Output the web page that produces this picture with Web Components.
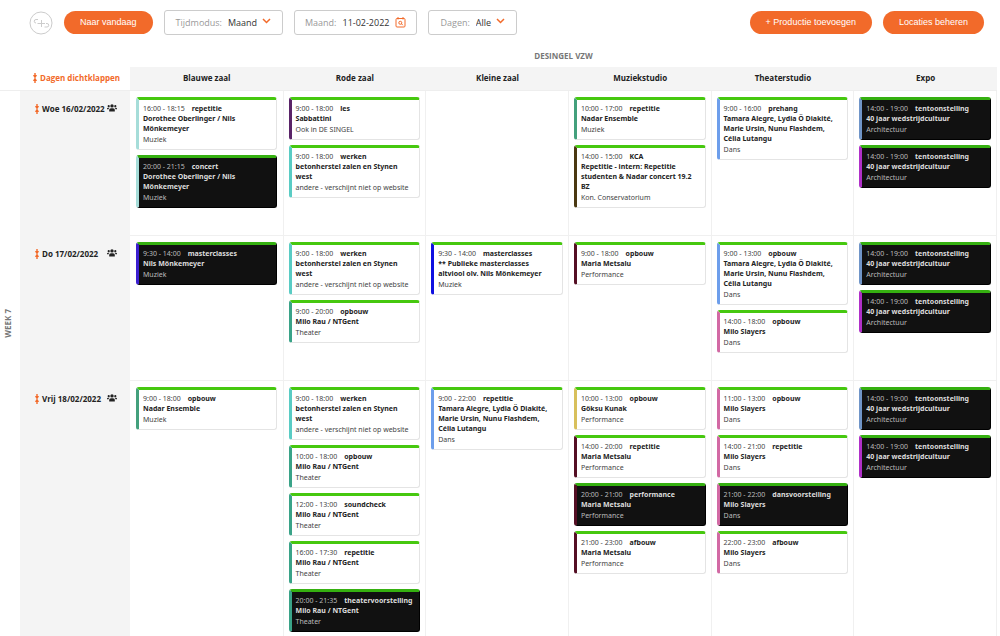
<!DOCTYPE html>
<html lang="nl">
<head>
<meta charset="utf-8">
<title>Planning</title>
<style>
html, body { margin: 0; height: 100%; background: #fff; }
body { font-family: "Open Sans", "Noto Sans", sans-serif; color: #222; }
</style>
</head>
<body>
<planner-app></planner-app>
<script>
const ORANGE = '#f26a2a';

class PillButton extends HTMLElement {
  constructor() {
    super();
    this.attachShadow({ mode: 'open' }).innerHTML = `
      <style>
        :host { display: block; }
        button { height: 23px; padding: 0 16px; border: 0; border-radius: 12px; background: ${ORANGE}; color: #fff;
          font: 9px/23px "Liberation Sans", Arial, sans-serif; white-space: nowrap; cursor: pointer; display: block; }
      </style>
      <button type="button"><slot></slot></button>`;
  }
}
customElements.define('pill-button', PillButton);

class BrandLogo extends HTMLElement {
  constructor() {
    super();
    this.attachShadow({ mode: 'open' }).innerHTML = `
      <style>:host { display: block; } svg { display: block; }</style>
      <svg width="24" height="24" viewBox="0 0 24 24" fill="none" stroke="#ccc" role="img" aria-label="Logo">
        <circle cx="12" cy="12" r="11"/>
        <path d="M9 8.500H7a1.750 1.750 0 0 0 0 3.500M8.500 12.500H16M12.500 9V16M17 12.500H18a1.750 1.750 0 0 1 0 3.500H15.500"/>
      </svg>`;
  }
}
customElements.define('brand-logo', BrandLogo);

const FIELD_CSS = `
  :host { display: block; }
  label { display: flex; align-items: center; box-sizing: border-box; height: 25px; padding: 0 11px; border: 1px solid #ccc;
    border-radius: 3px; font: 9px/12px "Open Sans", "Noto Sans", sans-serif; color: #999; }
  span { margin-right: 6px; }
  select, input { appearance: none; border: 0; padding: 0; margin: 0; background: none; outline: 0; color: #333; font: inherit; height: 12px; }
  svg { display: block; fill: none; stroke: ${ORANGE}; }
`;

class SelectField extends HTMLElement {
  connectedCallback() {
    const w = this.getAttribute('width');
    this.attachShadow({ mode: 'open' }).innerHTML = `
      <style>${FIELD_CSS} select { width: ${w}px; } svg { margin: 0 0 4px 4px; }</style>
      <label><span>${this.getAttribute('label')}:</span>
        <select><option>${this.getAttribute('value')}</option></select>
        <svg width="9" height="6" viewBox="0 0 9 6" stroke-width="1.500"><path d="M1 1l3.500 3.500L8 1"/></svg>
      </label>`;
  }
}
customElements.define('select-field', SelectField);

class DateField extends HTMLElement {
  connectedCallback() {
    this.attachShadow({ mode: 'open' }).innerHTML = `
      <style>${FIELD_CSS} label { padding: 0 10px; } input { width: 49px; } svg { margin-left: 4px; }</style>
      <label><span>${this.getAttribute('label')}:</span>
        <input type="text" value="${this.getAttribute('value')}">
        <svg width="11" height="11" viewBox="0 0 11 11"><rect x="1" y="1.500" width="9" height="8.500" rx="1"/>
          <path d="M3 0v2.500M8 0v2.500"/><circle cx="5.300" cy="5.800" r="1.500"/><path d="M6.500 6.800l1.300 1.400"/></svg>
      </label>`;
  }
}
customElements.define('date-field', DateField);

class CollapseIcon extends HTMLElement {
  constructor() {
    super();
    this.attachShadow({ mode: 'open' }).innerHTML = `
      <style>:host { display: block; } svg { display: block; fill: ${ORANGE}; }</style>
      <svg width="4" height="10" viewBox="0 0 4 10" aria-hidden="true">
        <path d="M1.300 0h1.400v2H4L2.700 4.700H1.300L0 2h1.300zM1.300 10h1.400V8H4L2.700 5.300H1.300L0 8h1.300z"/></svg>`;
  }
}
customElements.define('collapse-icon', CollapseIcon);

class DayLabel extends HTMLElement {
  constructor() {
    super();
    this.attachShadow({ mode: 'open' }).innerHTML = `
      <style>
        :host { display: flex; align-items: center; padding: 12px 13px 0 15px; font: 700 8px/12px "Open Sans", "Noto Sans", sans-serif; }
        span { flex: 1; margin-left: 3px; white-space: nowrap; }
        svg { display: block; fill: #222; margin-bottom: 2px; }
      </style>
      <collapse-icon></collapse-icon><span><slot></slot></span>
      <svg width="10" height="8" viewBox="0 0 10 8" aria-hidden="true">
        <circle cx="5" cy="1.900" r="1.700"/><circle cx="1.700" cy="2.200" r="1.100"/><circle cx="8.300" cy="2.200" r="1.100"/>
        <path d="M2.200 7.500V5.800Q2.200 4.200 4 4.200H6Q7.800 4.200 7.800 5.800V7.500zM0 5.300V4.700Q0 3.700 1 3.700H2.500Q1.500 4.400 1.500 5.300zM10 5.300V4.700Q10 3.700 9 3.700H7.500Q8.500 4.400 8.500 5.300z"/>
      </svg>`;
  }
}
customElements.define('day-label', DayLabel);

class EventCard extends HTMLElement {
  constructor() {
    super();
    this.attachShadow({ mode: 'open' }).innerHTML = `
      <style>
        :host { display: block; box-sizing: border-box; border: 1px solid #e4e4e4; border-top: 3px solid #46c80f;
          border-left: 3px solid var(--accent); border-radius: 3px; padding: 3px 3px 4px 4px; background: #fff;
          font: 7px/11px "Noto Sans", "Open Sans", sans-serif; color: #444; }
        :host([dark]) { background: #111; border-right-color: #000; border-bottom-color: #000; border-top-color: #35b010; color: #bbb; }
        div { white-space: nowrap; }
        b { margin-left: 7px; color: #222; }
        h3 { margin: 0; padding-right: 4px; font-size: 7px; line-height: 10px; color: #222; }
        :host([dark]) b, :host([dark]) h3 { color: #ddd; }
      </style>
      <div><slot name="time"></slot><b><slot name="kind"></slot></b></div>
      <h3><slot name="title"></slot></h3>
      <div><slot></slot></div>`;
  }
}
customElements.define('event-card', EventCard);

const TAM = 'Tamara Alegre, Lydia Ö Diakité, Marie Ursin, Nunu Flashdem, Célia Lutangu';
const BETON = ['9:00 - 18:00', 'werken', 'betonherstel zalen en Stynen west', 'andere - verschijnt niet op website', '#5accc4'];
const EXPO = [
  ['14:00 - 19:00', 'tentoonstelling', '40 jaar wedstrijdcultuur', 'Architectuur', '#7095c8', 1],
  ['14:00 - 19:00', 'tentoonstelling', '40 jaar wedstrijdcultuur', 'Architectuur', '#b030c8', 1]];
const rau = (time, kind, dark) => [time, kind, 'Milo Rau / NTGent', 'Theater', '#3aa388', dark];
const maria = (time, kind, dark) => [time, kind, 'Maria Metsalu', 'Performance', '#540f24', dark];
const slayers = (time, kind, dark) => [time, kind, 'Milo Slayers', 'Dans', '#d269a4', dark];

const ROOMS = ['Blauwe zaal', 'Rode zaal', 'Kleine zaal', 'Muziekstudio', 'Theaterstudio', 'Expo'];
const DAYS = [
  ['Woe 16/02/2022', [
    [['16:00 - 18:15', 'repetitie', 'Dorothee Oberlinger / Nils Mönkemeyer', 'Muziek', '#a6ddd9'],
     ['20:00 - 21:15', 'concert', 'Dorothee Oberlinger / Nils Mönkemeyer', 'Muziek', '#a6ddd9', 1]],
    [['9:00 - 18:00', 'les', 'Sabbattini', 'Ook in DE SINGEL', '#5a2468'], BETON],
    [],
    [['10:00 - 17:00', 'repetitie', 'Nadar Ensemble', 'Muziek', '#43a07c'],
     ['14:00 - 15:00', 'KCA', 'Repetitie - intern: Repetitie studenten &amp; Nadar concert 19.2 BZ', 'Kon. Conservatorium', '#4a3812']],
    [['9:00 - 16:00', 'prehang', TAM, 'Dans', '#6d9eeb']],
    EXPO]],
  ['Do 17/02/2022', [
    [['9:30 - 14:00', 'masterclasses', 'Nils Mönkemeyer', 'Muziek', '#3b1fd0', 1]],
    [BETON, rau('9:00 - 20:00', 'opbouw')],
    [['9:30 - 14:00', 'masterclasses', '** Publieke masterclasses altviool olv. Nils Mönkemeyer', 'Muziek', '#1010e0']],
    [maria('9:00 - 18:00', 'opbouw')],
    [['9:00 - 13:00', 'opbouw', TAM, 'Dans', '#6d9eeb'], slayers('14:00 - 18:00', 'opbouw')],
    EXPO]],
  ['Vrij 18/02/2022', [
    [['9:00 - 18:00', 'opbouw', 'Nadar Ensemble', 'Muziek', '#43a07c']],
    [BETON, rau('10:00 - 18:00', 'opbouw'), rau('12:00 - 13:00', 'soundcheck'), rau('16:00 - 17:30', 'repetitie'), rau('20:00 - 21:35', 'theatervoorstelling', 1)],
    [['9:00 - 22:00', 'repetitie', TAM, 'Dans', '#6d9eeb']],
    [['10:00 - 13:00', 'opbouw', 'Göksu Kunak', 'Performance', '#d8c05c'], maria('14:00 - 20:00', 'repetitie'), maria('20:00 - 21:00', 'performance', 1), maria('21:00 - 23:00', 'afbouw')],
    [slayers('11:00 - 13:00', 'opbouw'), slayers('14:00 - 21:00', 'repetitie'), slayers('21:00 - 22:00', 'dansvoorstelling', 1), slayers('22:00 - 23:00', 'afbouw')],
    EXPO]]
];

const card = ([time, kind, title, sub, accent, dark]) =>
  `<event-card ${dark ? 'dark' : ''} style="--accent:${accent}"><span slot="time">${time}</span><span slot="kind">${kind}</span><span slot="title">${title}</span>${sub}</event-card>`;

class ScheduleTable extends HTMLElement {
  constructor() {
    super();
    this.attachShadow({ mode: 'open' }).innerHTML = `
      <style>
        :host { display: block; padding-right: 3px; font: 8px/12px "Open Sans", "Noto Sans", sans-serif; }
        table { width: 100%; table-layout: fixed; border-collapse: separate; border-spacing: 0; }
        th, td { padding: 0; vertical-align: top; text-align: center; }
        .week { width: 20px; } .day { width: 110px; } .wide { width: 15.4%; }
        .venue { height: 22px; line-height: 22px; color: #777; }
        thead tr + tr th, thead tr + tr td { height: 23px; line-height: 22px; border-bottom: 1px solid #eee; }
        .room { background: #f4f4f4; color: #222; }
        button { display: flex; align-items: center; gap: 3px; height: 22px; margin-left: 13px; padding: 0; border: 0; background: none;
          color: ${ORANGE}; font: 700 8px/22px "Open Sans", "Noto Sans", sans-serif; white-space: nowrap; cursor: pointer; }
        tbody tr { height: 145px; }
        tbody tr:last-child { height: 260px; }
        .date { background: #f4f4f4; text-align: left; }
        td.slot { border-right: 1px solid #f0f0f0; border-bottom: 1px solid #f0f0f0; text-align: left; }
        .stack { display: flex; flex-direction: column; gap: 5px; padding: 6px 5px; }
        .date + .slot .stack { padding: 6px; }
        .number { padding-top: 218px; color: #777; }
        .number span { display: block; margin: 0 auto 0 2px; width: 12px; writing-mode: vertical-rl; transform: rotate(180deg); }
      </style>
      <table>
        <colgroup><col class="week"><col class="day"><col class="wide"><col span="5"></colgroup>
        <thead>
          <tr><td></td><td></td><th class="venue" colspan="6">DESINGEL VZW</th></tr>
          <tr><td></td><td><button type="button"><collapse-icon></collapse-icon>Dagen dichtklappen</button></td>
            ${ROOMS.map(r => `<th class="room" scope="col">${r}</th>`).join('')}</tr>
        </thead>
        <tbody>${DAYS.map(([date, cols], i) => `<tr>
          ${i ? '' : '<th class="number" rowspan="3" scope="rowgroup"><span>WEEK 7</span></th>'}
          <th class="date" scope="row"><day-label>${date}</day-label></th>
          ${cols.map(c => `<td class="slot"><div class="stack">${c.map(card).join('')}</div></td>`).join('')}</tr>`).join('')}
        </tbody>
      </table>`;
  }
}
customElements.define('schedule-table', ScheduleTable);

class PlannerApp extends HTMLElement {
  constructor() {
    super();
    this.attachShadow({ mode: 'open' }).innerHTML = `
      <style>
        :host { display: flex; flex-direction: column; height: 100%; }
        header { display: flex; align-items: center; gap: 11px; padding: 10px 16px 10px 29px; }
        .spacer { flex: 1; }
        main { flex: 1; min-height: 0; overflow: auto; scrollbar-width: none; }
      </style>
      <header>
        <brand-logo></brand-logo>
        <pill-button>Naar vandaag</pill-button>
        <select-field label="Tijdmodus" value="Maand" width="30"></select-field>
        <date-field label="Maand" value="11-02-2022"></date-field>
        <select-field label="Dagen" value="Alle" width="16"></select-field>
        <div class="spacer"></div>
        <pill-button>+ Productie toevoegen</pill-button>
        <pill-button>Locaties beheren</pill-button>
      </header>
      <main><schedule-table></schedule-table></main>`;
  }
}
customElements.define('planner-app', PlannerApp);
</script>
</body>
</html>
